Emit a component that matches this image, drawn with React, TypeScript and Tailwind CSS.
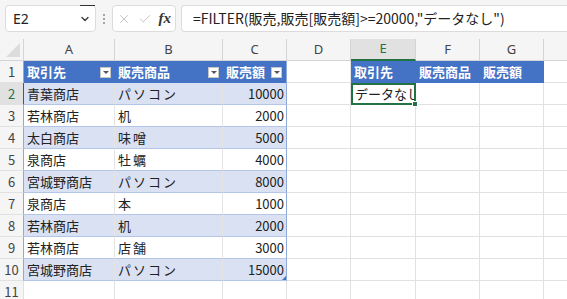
import { ChevronDown, X, Check } from 'lucide-react';

// column widths in px: A..H (H runs off the window)
const COLS = [
  { key: 'A', w: 'w-[91px]' },
  { key: 'B', w: 'w-[108px]' },
  { key: 'C', w: 'w-[64px]' },
  { key: 'D', w: 'w-[64px]' },
  { key: 'E', w: 'w-[65px]' },
  { key: 'F', w: 'w-[64px]' },
  { key: 'G', w: 'w-[64px]' },
  { key: 'H', w: 'w-[64px]' },
];

const SALES: [string, string, number][] = [
  ['青葉商店', 'パソコン', 10000],
  ['若林商店', '机', 2000],
  ['太白商店', '味噌', 5000],
  ['泉商店', '牡蠣', 4000],
  ['宮城野商店', 'パソコン', 8000],
  ['泉商店', '本', 1000],
  ['若林商店', '机', 2000],
  ['若林商店', '店舗', 3000],
  ['宮城野商店', 'パソコン', 15000],
];

const FONT = "font-['Noto_Sans_CJK_JP','Noto_Sans',sans-serif]";
const HEAD = 'relative flex h-[22px] shrink-0 items-center whitespace-nowrap bg-[#4472c4] pl-[3px] text-[13px] font-bold text-white';

function FilterButton() {
  return (
    <span className="absolute right-[4px] top-[6px] flex h-[11px] w-[11px] items-center justify-center border border-[#c6c6c6] bg-white">
      <span className="h-0 w-0 border-x-[3px] border-t-[3px] border-x-transparent border-t-[#555]" />
    </span>
  );
}

function RowHeader({ n, active, inTable }: { n: number; active?: boolean; inTable?: boolean }) {
  return (
    <div
      className={`flex h-[22px] w-[24px] shrink-0 items-center justify-center border-b border-r text-[13px] ${
        active
          ? 'border-b-[#e1e1e1] border-r-[#217346] bg-[#e1e1e1] text-[#217346]'
          : inTable
          ? 'border-b-[#e1e1e1] border-r-[#8eaadb] bg-[#f5f5f5] text-[#444]'
          : 'border-[#e1e1e1] bg-[#f5f5f5] text-[#444]'
      }`}
    >
      {n}
    </div>
  );
}

function TableHeaderRow() {
  return (
    <div className="flex w-max">
      <RowHeader n={1} inTable />
      <div className={`${HEAD} ${COLS[0].w}`}>
        取引先
        <FilterButton />
      </div>
      <div className={`${HEAD} ${COLS[1].w}`}>
        販売商品
        <FilterButton />
      </div>
      <div className={`${HEAD} border-r border-[#8eaadb] ${COLS[2].w}`}>
        販売額
        <FilterButton />
      </div>
      <div className={`h-[22px] shrink-0 border-b border-r border-[#e1e1e1] bg-white ${COLS[3].w}`} />
      <div className={`${HEAD} ${COLS[4].w}`}>取引先</div>
      <div className={`${HEAD} ${COLS[5].w}`}>販売商品</div>
      <div className={`${HEAD} ${COLS[6].w}`}>販売額</div>
      <div className={`h-[22px] shrink-0 border-b border-r border-[#e1e1e1] bg-white ${COLS[7].w}`} />
    </div>
  );
}

function EmptyCells({ from }: { from: number }) {
  return (
    <>
      {COLS.slice(from).map((c) => (
        <div key={c.key} className={`h-[22px] shrink-0 border-b border-r border-[#e1e1e1] bg-white ${c.w}`} />
      ))}
    </>
  );
}

export default function App() {
  return (
    <div className={`h-[299px] w-[567px] overflow-hidden bg-[#f5f5f5] text-[#222] ${FONT}`}>
      {/* formula bar */}
      <div className="flex h-[39px] items-start pl-[5px] pt-[5px]">
        <div className="relative flex h-[27px] w-[91px] shrink-0 items-center rounded-[4px] border border-[#dcdcdc] bg-white pl-[7px] pr-[4px] font-['Noto_Sans',sans-serif] text-[14px]">
          <span className="absolute -top-px left-[74px] h-[1px] w-[15px] bg-[#333]" />
          <span className="flex-1">E2</span>
          <ChevronDown className="h-[12px] w-[12px] text-[#333]" strokeWidth={2.5} />
        </div>
        <div className="mx-[7px] flex h-[27px] flex-col items-center justify-center gap-[2px]">
          <span className="h-[2px] w-[2px] rounded-full bg-[#888]" />
          <span className="h-[2px] w-[2px] rounded-full bg-[#888]" />
          <span className="h-[2px] w-[2px] rounded-full bg-[#888]" />
        </div>
        <div className="flex h-[27px] w-[64px] shrink-0 items-center justify-between rounded-[4px] border border-[#dcdcdc] bg-white px-[4px]">
          <X className="h-[14px] w-[14px] text-[#bdbdbd]" strokeWidth={1.5} />
          <Check className="h-[14px] w-[14px] text-[#bdbdbd]" strokeWidth={1.5} />
          <span className="font-['Liberation_Serif',serif] text-[15px] font-bold italic text-[#333]">fx</span>
        </div>
        <div className="ml-[5px] flex h-[27px] flex-1 items-center whitespace-nowrap rounded-l-[4px] border border-r-0 border-[#dcdcdc] bg-white pl-[11px] text-[14px] text-[#222]">
          =FILTER(販売,販売[販売額]&gt;=20000,"データなし")
        </div>
      </div>

      {/* grid */}
      <div className="bg-white">
        {/* column headers */}
        <div className="flex w-max bg-[#f5f5f5]">
          <div className="relative h-[22px] w-[24px] shrink-0 border-b border-r border-[#d4d4d4]">
            <span className="absolute bottom-[3px] right-[3px] h-0 w-0 border-b-[14px] border-l-[14px] border-b-[#dcdcdc] border-l-transparent" />
          </div>
          {COLS.map((c) => (
            <div
              key={c.key}
              className={`flex h-[22px] shrink-0 items-center justify-center border-r font-['Noto_Sans',sans-serif] text-[13px] ${c.w} ${
                c.key === 'E'
                  ? 'border-b-2 border-b-[#217346] border-r-[#d4d4d4] bg-[#e1e1e1] text-[#217346]'
                  : 'border-b border-[#d4d4d4] text-[#444]'
              }`}
            >
              {c.key}
            </div>
          ))}
        </div>

        <TableHeaderRow />

        {SALES.map(([who, item, amount], i) => {
          const rowNo = i + 2;
          const banded = i % 2 === 0;
          const fill = banded ? 'bg-[#d9e1f2]' : 'bg-white';
          return (
            <div key={rowNo} className="flex w-max">
              <RowHeader n={rowNo} active={rowNo === 2} inTable />
              <div className={`flex h-[22px] shrink-0 items-center whitespace-nowrap border-b border-r border-b-[#b4c6e7] border-r-[#e4e4e4] pl-[3px] text-[13px] ${fill} ${COLS[0].w}`}>
                {who}
              </div>
              <div className={`flex h-[22px] shrink-0 items-center whitespace-nowrap border-b border-r border-b-[#b4c6e7] border-r-[#e4e4e4] pl-[3px] text-[13px] tracking-[2px] ${fill} ${COLS[1].w}`}>
                {item}
              </div>
              <div className={`relative flex h-[22px] shrink-0 items-center justify-end border-b border-r border-b-[#b4c6e7] border-r-[#8eaadb] pr-[2px] text-[13px] ${fill} ${COLS[2].w}`}>
                {amount}
                {rowNo === 10 && (
                  <span className="absolute bottom-0 right-0 h-0 w-0 border-b-[4px] border-l-[4px] border-b-[#4472c4] border-l-transparent" />
                )}
              </div>
              <div className={`h-[22px] shrink-0 border-b border-r border-[#e1e1e1] bg-white ${COLS[3].w}`} />
              {rowNo === 2 ? (
                <div className={`relative flex h-[22px] shrink-0 items-center border-2 border-[#217346] bg-white text-[13px] ${COLS[4].w}`}>
                  <span className="overflow-hidden whitespace-nowrap pl-[2px]">データなし</span>
                  <span className="absolute -bottom-[4px] -right-[4px] h-[6px] w-[6px] border border-white bg-[#217346]" />
                </div>
              ) : (
                <div className={`h-[22px] shrink-0 border-b border-r border-[#e1e1e1] bg-white ${COLS[4].w}`} />
              )}
              <EmptyCells from={5} />
            </div>
          );
        })}

        <div className="flex w-max">
          <RowHeader n={11} />
          <EmptyCells from={0} />
        </div>
      </div>
    </div>
  );
}
